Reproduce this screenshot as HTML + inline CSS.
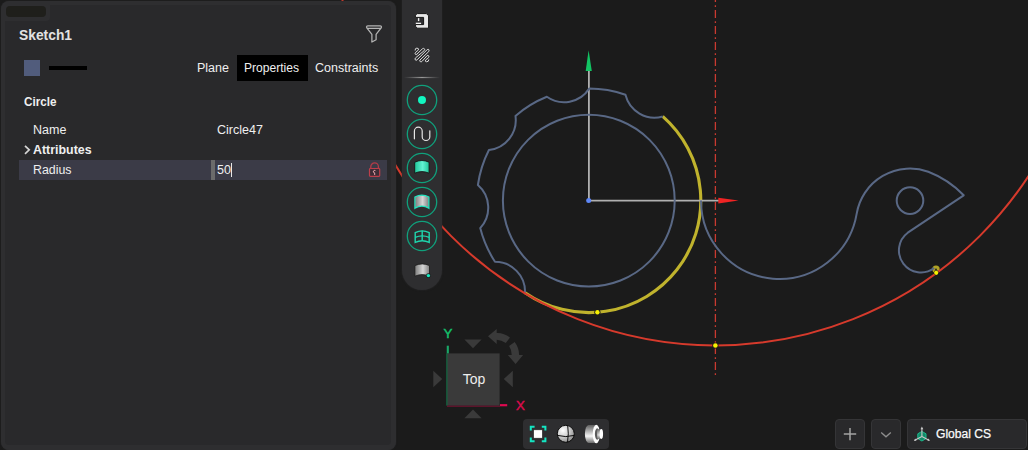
<!DOCTYPE html>
<html>
<head>
<meta charset="utf-8">
<style>
html,body{margin:0;padding:0;}
body{width:1028px;height:450px;overflow:hidden;background:#1b1b1b;font-family:"Liberation Sans",sans-serif;position:relative;}
#cv{position:absolute;left:0;top:0;width:1028px;height:450px;}
#panel{position:absolute;left:1.2px;top:1.2px;width:395.2px;height:448.4px;background:#2e2e30;border-radius:8px;box-shadow:0 0 1.3px rgba(46,46,48,0.95);}
#inner{position:absolute;left:3.8px;top:3.8px;width:386px;height:440px;background:#29292b;border-radius:4px;}
#tab{position:absolute;left:3.8px;top:3.8px;width:45px;height:16px;background:#2e2e30;border-radius:0 0 4px 0;}
#pill{position:absolute;left:4.8px;top:4.8px;width:40px;height:11px;background:#1f1f1b;border-radius:4px;}
.t{position:absolute;white-space:nowrap;color:#efefef;font-size:12.5px;line-height:16px;transform-origin:0 50%;}
.b{font-weight:bold;}
#toolbar{position:absolute;left:401.7px;top:-30px;width:40.8px;height:320px;background:#2e2e30;border-radius:20.4px;box-shadow:0 0 2px rgba(46,46,48,0.85);}
#btns{position:absolute;left:523px;top:419px;width:86px;height:30px;background:#2e2e30;border-radius:4px;}
.sq{position:absolute;top:419px;height:30px;background:#29292b;border:1px solid #353537;border-radius:4px;box-sizing:border-box;}
</style>
</head>
<body>
<svg id="cv" width="1028" height="450" viewBox="0 0 1028 450">
  <!-- centerline -->
  <line x1="715.4" y1="-6" x2="715.4" y2="375" stroke="#c93a30" stroke-width="1.3" stroke-dasharray="8 3.2 1.8 3"/>
  <!-- yellow selected arc -->
  <path d="M662.72 116.46 A112.0 112.0 0 0 1 525.04 292.68" fill="none" stroke="#c0b32d" stroke-width="3.1"/>
  <circle cx="936" cy="269.3" r="2.3" fill="none" stroke="#b0a226" stroke-width="2.8"/>
  <!-- axes -->
  <line x1="588.9" y1="200.6" x2="588.9" y2="70" stroke="#b0b0b0" stroke-width="1.8"/>
  <line x1="588.6" y1="200.7" x2="719" y2="200.7" stroke="#b0b0b0" stroke-width="1.7"/>
  <polygon points="588.6,50.3 585.7,71 591.8,71" fill="#12c463"/>
  <polygon points="738.6,200.6 718.3,197.8 718.3,203.5" fill="#f02424"/>
  <!-- gear -->
  <g fill="none" stroke="#596885" stroke-width="2" stroke-linejoin="round">
    <circle cx="588.8" cy="200.6" r="85.9"/>
    <path d="M662.72 116.46 A30 30 0 0 1 625.45 94.77 A112.0 112.0 0 0 0 589.19 88.60 A30 30 0 0 1 546.84 96.76 A112.0 112.0 0 0 0 515.47 115.94 A30 30 0 0 1 488.92 149.93 A112.0 112.0 0 0 0 477.89 185.01 A30 30 0 0 1 480.22 228.07 A112.0 112.0 0 0 0 494.98 261.76 A30 30 0 0 1 525.04 292.68"/>
    <!-- S curve + pawl -->
    <path d="M701 200.6 A78.4 78.4 0 0 0 856.7 213.6 A54.1 54.1 0 0 1 928.3 171.7 A96.5 96.5 0 0 1 963.7 195.3 L907.8 232.7 A22 22 0 1 0 934.2 268"/>
    <circle cx="910" cy="200.6" r="13.3"/>
  </g>
  <circle cx="597.4" cy="312.3" r="3.1" fill="#1b1b1b"/><circle cx="597.4" cy="312.3" r="2.2" fill="#f6f000"/>
  <!-- red big circle -->
  <circle cx="715.4" cy="-28.6" r="374" fill="none" stroke="#d63a2c" stroke-width="2"/>
  <circle cx="715.4" cy="345.5" r="3.1" fill="#1b1b1b"/><circle cx="715.4" cy="345.5" r="2.3" fill="#f6f000"/>
  <circle cx="936.2" cy="272.8" r="2.45" fill="#1b1b1b"/><circle cx="936.2" cy="272.8" r="2.1" fill="#f6f000"/>
  <circle cx="588.7" cy="200.6" r="2.5" fill="#5f88f8"/>

  <!-- view cube -->
  <g fill="#3a3a3a">
    <rect x="447.2" y="353.4" width="52.4" height="52.2"/>
    <polygon points="464.4,339.6 481.6,339.6 473,348.3"/>
    <polygon points="464.4,418.3 481.6,418.3 473,409.6"/>
    <polygon points="433.3,370.7 433.3,387.2 442.2,379"/>
    <polygon points="512.8,370.7 512.8,387.2 503.8,379"/>
    <path d="M488 336.2 L496.7 328.9 L496.7 333 Q503.5 332.6 510 337.6 L505.8 343.1 Q501.5 340.2 496.7 339.8 L496.7 344 Z"/>
    <path d="M515.6 364 L507.8 355.1 L511.7 355.1 Q511.8 350 509.1 345.9 L514.7 342 Q519.2 348 519.1 355.1 L523.1 355.1 Z"/>
  </g>
  <line x1="447.8" y1="345.7" x2="447.8" y2="353.4" stroke="#1aa868" stroke-width="2.1"/>
  <line x1="446.9" y1="353.4" x2="446.9" y2="405.6" stroke="#137a4c" stroke-width="1"/>
  <line x1="447" y1="406.2" x2="500" y2="406.2" stroke="#7a1234" stroke-width="1"/>
  <line x1="500" y1="405.2" x2="507.2" y2="405.2" stroke="#de0a50" stroke-width="2.2"/>
  <text x="443.4" y="337.9" font-family="Liberation Sans, sans-serif" font-size="13.3" fill="#14c26c" stroke="#14c26c" stroke-width="0.45">Y</text>
  <text x="515.9" y="409.9" font-family="Liberation Sans, sans-serif" font-size="13.3" fill="#d80c4c" stroke="#d80c4c" stroke-width="0.45">X</text>
  <text x="474" y="384.1" text-anchor="middle" font-family="Liberation Sans, sans-serif" font-size="14" fill="#ededed">Top</text>
</svg>

<div id="panel">
  <div id="inner"></div>
  <div id="tab"></div>
  <div id="pill"></div>
</div>

<!-- panel contents (page coordinates) -->
<div class="t b" style="left:19px;top:25.6px;font-size:15px;line-height:18px;color:#e2e2e2;transform:scaleX(0.922);">Sketch1</div>
<svg style="position:absolute;left:364px;top:23px" width="22" height="22" viewBox="0 0 22 22">
  <path d="M2.5 4.1 Q2.5 2.8 3.8 2.8 H16.2 Q17.5 2.8 17.5 4.1 Q17.5 5.4 16.2 5.4 H3.8 Q2.5 5.4 2.5 4.1 Z M3 5.2 L7.9 11.4 V19 L12.1 16.7 V11.4 L17 5.2" fill="none" stroke="#b4b4b4" stroke-width="1.25" stroke-linejoin="round"/>
</svg>
<div style="position:absolute;left:24px;top:60px;width:16px;height:16px;background:#515c7c;"></div>
<div style="position:absolute;left:49px;top:66px;width:38px;height:3.5px;background:#000;"></div>
<div class="t" style="left:197px;top:60px;">Plane</div>
<div style="position:absolute;left:237px;top:55px;width:71px;height:25.5px;background:#000;"></div>
<div class="t" style="left:244px;top:60px;transform:scaleX(0.966);">Properties</div>
<div class="t" style="left:315px;top:60px;">Constraints</div>
<div class="t b" style="left:24px;top:94px;transform:scaleX(0.933);">Circle</div>
<div class="t" style="left:33px;top:122px;">Name</div>
<div class="t" style="left:217px;top:122px;">Circle47</div>
<div class="t b" style="left:33px;top:142px;transform:scaleX(0.992);">Attributes</div>
<svg style="position:absolute;left:23px;top:143px" width="9" height="13" viewBox="0 0 9 13"><path d="M2 2.8 L6.2 6.8 L2 10.8" fill="none" stroke="#d4d4d4" stroke-width="1.7"/></svg>
<div style="position:absolute;left:19px;top:160px;width:368px;height:20px;background:#3b3b47;"></div>
<div style="position:absolute;left:211px;top:160px;width:4px;height:20px;background:#6b6b6b;"></div>
<div class="t" style="left:33px;top:162px;transform:scaleX(0.99);">Radius</div>
<div class="t" style="left:217px;top:162px;">50</div>
<div style="position:absolute;left:231px;top:163px;width:1px;height:14px;background:#e8e8e8;"></div>
<svg style="position:absolute;left:367px;top:161px" width="16" height="18" viewBox="0 0 16 18">
  <rect x="2.5" y="7.5" width="10.2" height="7.8" rx="0.8" fill="#3d2c36" stroke="#bd3f4b" stroke-width="1.2"/>
  <path d="M3.8 7.4 V5.7 A3.8 3.8 0 0 1 11.4 5.7 V7.4" fill="none" stroke="#b43c48" stroke-width="1.3"/>
  <path d="M8.7 10.1 A1.25 1.25 0 1 0 7.7 11.9 V14" fill="none" stroke="#eaa6ae" stroke-width="1"/>
</svg>

<div id="toolbar"></div>
<svg style="position:absolute;left:401px;top:0" width="42" height="292" viewBox="401 0 42 292">
  <defs>
    <linearGradient id="gT" x1="0" x2="1" y1="0" y2="0"><stop offset="0" stop-color="#1fc497"/><stop offset="0.55" stop-color="#62f2d2"/><stop offset="1" stop-color="#1fc497"/></linearGradient>
    <linearGradient id="gG" x1="0" x2="1" y1="0" y2="0"><stop offset="0" stop-color="#7c7c7c"/><stop offset="0.55" stop-color="#d6d6d6"/><stop offset="1" stop-color="#808080"/></linearGradient>
    <linearGradient id="sep" x1="0" x2="1" y1="0" y2="0"><stop offset="0" stop-color="#8a8a8a" stop-opacity="0"/><stop offset="0.5" stop-color="#9a9a9a"/><stop offset="1" stop-color="#8a8a8a" stop-opacity="0"/></linearGradient>
  </defs>
  <!-- icon1 -->
  <path d="M417.2 13.6 H426.4 L428.6 15.8 V28.2 H417.6 L415.4 26.4 V24.6 H423.6 V17.4 H415.4 V15.2 Z" fill="#e9e9e9" stroke="#161616" stroke-width="1"/>
  <rect x="417.9" y="18.1" width="1.4" height="3" fill="#f2f2f2"/>
  <rect x="415.8" y="22.7" width="5.3" height="1.3" fill="#f2f2f2"/>
  <!-- icon2 hatch -->
  <g fill="none" stroke-linecap="round" stroke-linejoin="round">
    <path d="M415.1 50.1 Q415 48.1 416.9 48.1 Q418.9 48.2 418.5 49.9 L415.5 52.5 Q414.7 53.6 415.4 54.3 Q416.2 54.9 417 54.1 L422.3 48.9 Q423.5 47.9 424.4 48.8 Q425.1 49.7 424.2 50.6 L415.5 57.9 Q414.6 59 415.3 59.9 Q416.1 60.7 417 59.9 L427.2 49.6 Q428.2 48.8 428.9 49.8 Q429.4 50.8 428.6 51.7 L419.9 60.1 Q419.3 61.2 420.3 61.7 Q421.3 62.1 422.1 61.3 L427.1 55.7 Q428 54.9 428.7 55.8 Q429.3 56.8 428.5 57.6 L425.5 60.1 Q424.8 61.7 426.7 61.8 Q428.8 61.8 428.8 59.9" stroke="#dcdcdc" stroke-width="1"/>
  </g>
  <rect x="404" y="76.9" width="36" height="1.2" fill="url(#sep)"/>
  <g fill="none" stroke="#10a07c" stroke-width="1.3">
    <circle cx="422" cy="100" r="14.7"/>
    <circle cx="422" cy="134" r="14.7"/>
    <circle cx="422" cy="168" r="14.7"/>
    <circle cx="422" cy="202" r="14.7"/>
    <circle cx="422" cy="236" r="14.7"/>
  </g>
  <circle cx="422" cy="100" r="4" fill="#12f5c0"/>
  <path d="M414.4 138.8 V131.1 A3.9 3.9 0 0 1 422.2 131.1 V136.7 A3.8 3.8 0 0 0 429.8 136.7 V130.8" fill="none" stroke="#e6e6e6" stroke-width="1.2" stroke-linecap="round"/>
  <path d="M414.7 162.2 Q421.9 158.8 429.1 162.2 V173.2 Q421.9 170 414.7 173.2 Z" fill="url(#gT)" stroke="#151515" stroke-width="0.9"/>
  <path d="M414.9 197 Q421.9 193.4 428.9 197 V208.3 Q421.9 203.9 414.9 208.3 Z" fill="url(#gG)" stroke="#22e6c0" stroke-width="1.2"/>
  <g fill="none" stroke="#1fd6ae" stroke-width="1.4">
    <path d="M415.2 232.6 Q422.2 229.2 429.2 232.6 V242.4 Q422.2 239 415.2 242.4 Z"/>
    <path d="M415.2 237.4 Q422.2 234.4 429.2 237.4"/>
    <path d="M422.2 230.8 V240.6"/>
  </g>
  <path d="M414.9 265.6 Q422.2 262.2 429.5 265.6 V276.2 Q422.2 273 414.9 276.2 Z" fill="url(#gG)" stroke="#1a1a1a" stroke-width="0.8"/>
  <circle cx="428.4" cy="275.6" r="2.3" fill="#1a1a1a"/>
  <circle cx="428.4" cy="275.6" r="1.7" fill="#16ecc2"/>
</svg>

<div id="btns"></div>
<svg style="position:absolute;left:523px;top:419px" width="86" height="31" viewBox="523 419 86 31">
  <defs>
    <radialGradient id="sph" cx="0.33" cy="0.3" r="0.85"><stop offset="0" stop-color="#ffffff"/><stop offset="0.45" stop-color="#cfcfcf"/><stop offset="1" stop-color="#7a7a7a"/></radialGradient>
    <linearGradient id="cyl" x1="0" x2="0" y1="0" y2="1"><stop offset="0" stop-color="#5e5e5e"/><stop offset="0.62" stop-color="#f4f4f4"/><stop offset="1" stop-color="#6c6c6c"/></linearGradient><linearGradient id="cyl2" x1="0" x2="0" y1="0" y2="1"><stop offset="0" stop-color="#6a6a6a"/><stop offset="0.6" stop-color="#dcdcdc"/><stop offset="1" stop-color="#767676"/></linearGradient>
  </defs>
  <g fill="none" stroke="#14e6c2" stroke-width="2">
    <path d="M530.8 430.6 V426.8 H534.6"/><path d="M541.8 426.8 H545.4 V430.6"/>
    <path d="M530.8 437.4 V441.2 H534.6"/><path d="M541.8 441.2 H545.4 V437.4"/>
  </g>
  <rect x="533.6" y="429.8" width="8.8" height="8.4" fill="#fff" stroke="#222" stroke-width="0.6"/>
  <circle cx="565.8" cy="433.8" r="8.5" fill="url(#sph)" stroke="#0c0c0c" stroke-width="1"/>
  <path d="M557.3 435.4 Q565.8 437.8 574.3 435.4" fill="none" stroke="#0e0e0e" stroke-width="1"/>
  <path d="M567.7 425.4 Q569 433.8 567.5 442.2" fill="none" stroke="#0e0e0e" stroke-width="1"/>
  <path d="M588.6 424.9 H596.2 V443 H588.6 A3.7 9.05 0 0 1 588.6 424.9 Z" fill="url(#cyl)"/>
  <ellipse cx="596.3" cy="434" rx="3.6" ry="9.2" fill="#fdfdfd"/>
  <ellipse cx="597.2" cy="434" rx="2.3" ry="5.7" fill="#5a5a5a"/>
  <path d="M597.2 429.3 H601.2 V438.7 H597.2 Z" fill="url(#cyl2)"/>
  <ellipse cx="601.3" cy="434" rx="1.75" ry="4.9" fill="#ffffff"/>
</svg>

<div class="sq" style="left:835px;width:30px;"></div>
<div class="sq" style="left:871px;width:30px;"></div>
<div class="sq" style="left:907px;width:120px;"></div>
<svg style="position:absolute;left:835px;top:419px" width="193" height="31" viewBox="835 419 193 31">
  <path d="M843.8 434.1 H856.2 M850 427.9 V440.3" stroke="#a4a4a4" stroke-width="1.5" fill="none"/>
  <path d="M881.2 432.4 L886 436.8 L890.8 432.4" stroke="#8e8e8e" stroke-width="1.3" fill="none"/>
  <polygon points="921.9,431.4 926,433.8 926,438.6 921.9,441 917.8,438.6 917.8,433.8" fill="#118a68" stroke="#1fba8e" stroke-width="1"/>
  <path d="M921.9 436.4 V428.2 M921.9 436.4 L914.8 440.2 M921.9 436.4 L929 440.2" stroke="#c8c8c8" stroke-width="1.1" fill="none"/>
  <polygon points="921.9,426.6 920.5,429.2 923.3,429.2" fill="#c8c8c8"/>
  <polygon points="913.9,440.9 916.5,440.6 915.2,438.6" fill="#c8c8c8"/>
  <polygon points="929.9,440.9 927.3,440.6 928.6,438.6" fill="#c8c8c8"/>
</svg>
<div class="t" style="left:936px;top:426px;font-size:12.5px;color:#fbfbfb;-webkit-text-stroke:0.25px #fbfbfb;transform:scaleX(0.968);">Global CS</div>
</body>
</html>
